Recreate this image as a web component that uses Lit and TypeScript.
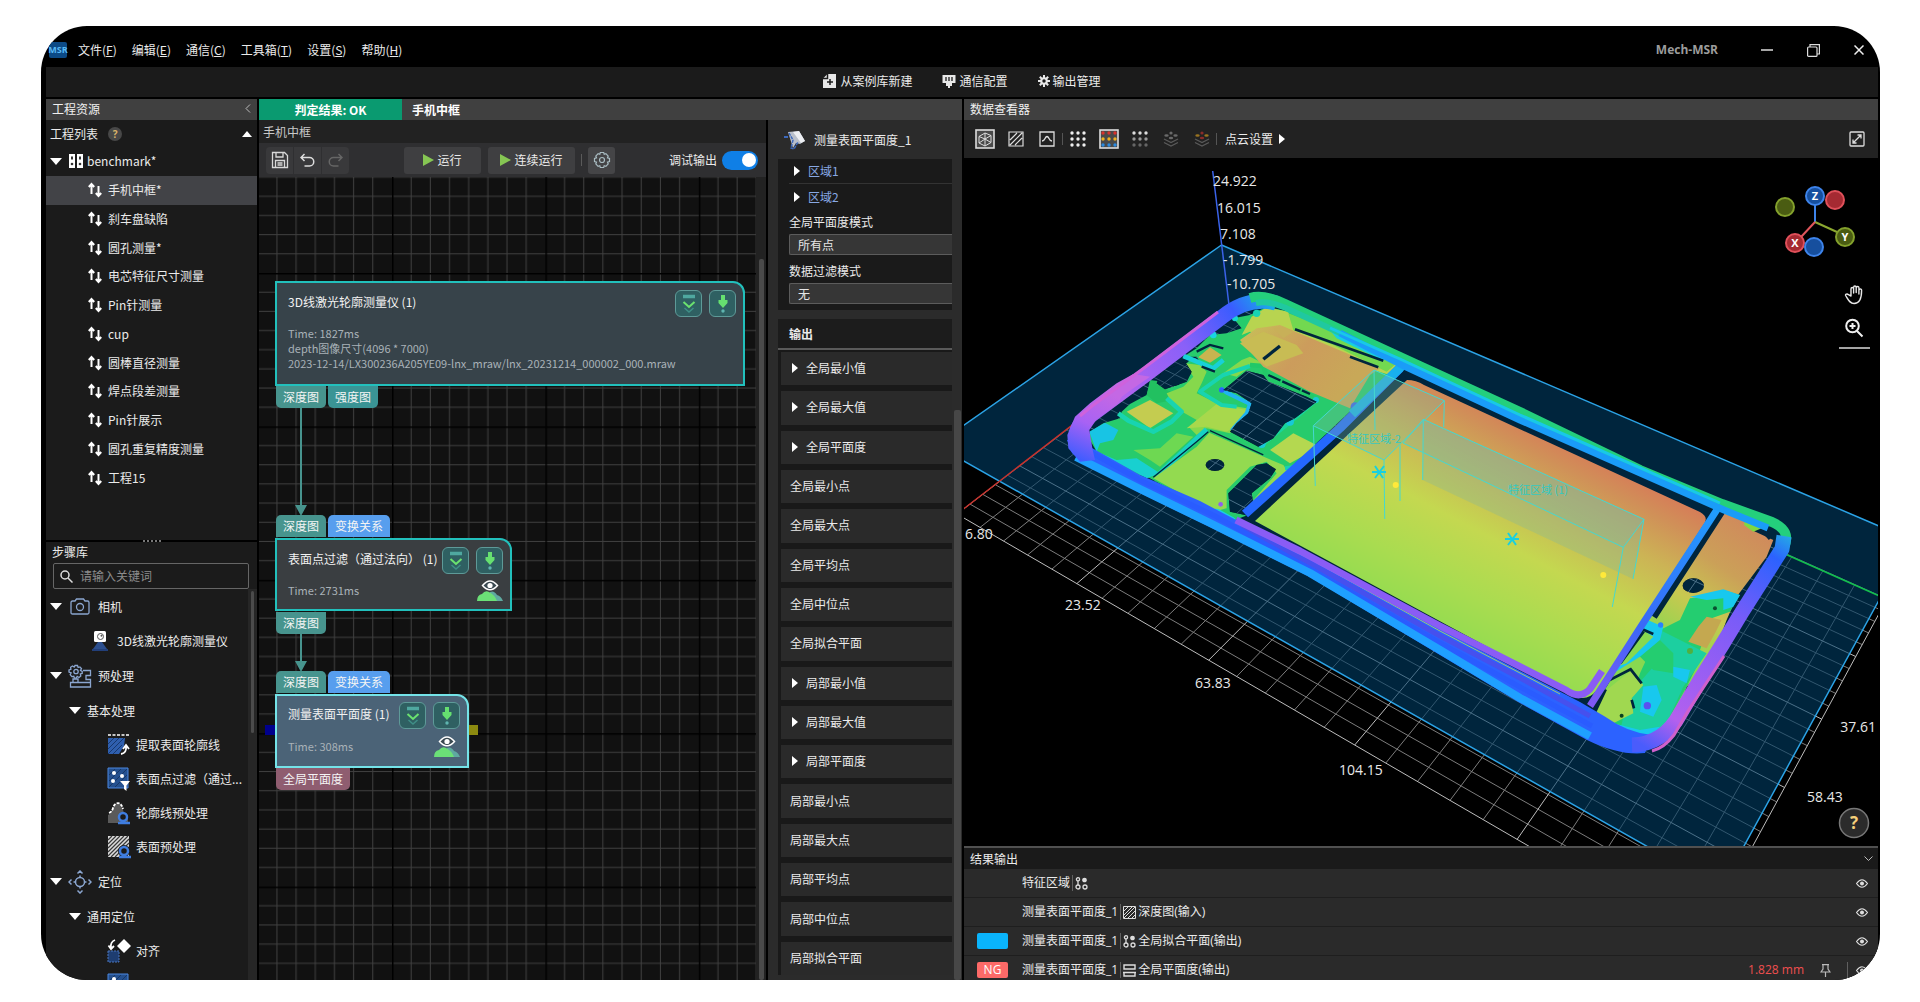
import { LitElement, html, svg, css, nothing } from "lit";
import { customElement } from "lit/decorators.js";
import { classMap } from "lit/directives/class-map.js";

type Pt = [number, number];

/* ---------- perspective floor grid ---------- */
const O: Pt = [1230, 305], R: Pt = [1887, 599], C: Pt = [1699, 945], L: Pt = [957, 514];
const project = (() => {
  const dx1 = R[0] - C[0], dx2 = L[0] - C[0], sx = O[0] - R[0] + C[0] - L[0];
  const dy1 = R[1] - C[1], dy2 = L[1] - C[1], sy = O[1] - R[1] + C[1] - L[1];
  const det = dx1 * dy2 - dy1 * dx2;
  const g = (sx * dy2 - sy * dx2) / det;
  const h = (dx1 * sy - dy1 * sx) / det;
  return (u: number, v: number) => {
    const w = g * u + h * v + 1;
    const x = ((R[0] - O[0] + g * R[0]) * u + (L[0] - O[0] + h * L[0]) * v + O[0]) / w;
    const y = ((R[1] - O[1] + g * R[1]) * u + (L[1] - O[1] + h * L[1]) * v + O[1]) / w;
    return `${x.toFixed(1)},${y.toFixed(1)}`;
  };
})();
const CELLS = 25;
const gridPath = (major: boolean) => {
  let d = "";
  for (let i = 0; i <= CELLS; i++) {
    if ((i % 5 === 0) !== major) continue;
    const t = i / CELLS;
    d += `M${project(t, 0)}L${project(t, 1)}M${project(0, t)}L${project(1, t)}`;
  }
  return d;
};
const MINOR = gridPath(false);
const MAJOR = gridPath(true);

/* ---------- icons ---------- */
const icons = {
  updown: html`<svg width="14" height="16" viewBox="0 0 14 16" fill="none" stroke="#fff" stroke-width="2"><path d="M3.500 12V2.500M.8 5 3.500 2 6.200 5M10.500 4v9.500M7.800 11l2.700 3 2.700-3"/></svg>`,
  bench: html`<svg width="14" height="14" viewBox="0 0 14 14" fill="#fff"><path d="M0 0h6v14H0zM8 0h6v14H8z"/><path d="M2 2.500h2v3H2zM10 2.500h2v3h-2z" fill="#333"/><circle cx="3" cy="10" r="1.300" fill="#333"/><circle cx="11" cy="10" r="1.300" fill="#333"/></svg>`,
  down: html`<svg width="12" height="7" viewBox="0 0 12 7" fill="#fff"><path d="M0 0h12L6 7z"/></svg>`,
  up: html`<svg width="10" height="6" viewBox="0 0 10 6" fill="#fff"><path d="M0 6h10L5 0z"/></svg>`,
  right: html`<svg width="6" height="10" viewBox="0 0 6 10" fill="#fff"><path d="M0 0v10l6-5z"/></svg>`,
  search: html`<svg width="13" height="13" viewBox="0 0 13 13" fill="none" stroke="#ddd" stroke-width="1.500"><circle cx="5" cy="5" r="4"/><path d="m8 8 4.500 4.500"/></svg>`,
  camera: html`<svg width="20" height="18" viewBox="0 0 20 18" fill="none" stroke="#8ba6d0" stroke-width="1.300"><path d="M1 4.500q0-1.500 1.500-1.500H5L6.500 1h7L15 3h2.500Q19 3 19 4.500v10q0 1.500-1.500 1.500h-15Q1 16 1 14.500z"/><circle cx="10" cy="9" r="3.500"/></svg>`,
  laser: html`<svg width="18" height="20" viewBox="0 0 18 20"><rect x="3" y="0" width="12" height="11" rx="1.500" fill="#fff"/><circle cx="9.500" cy="5.500" r="3" fill="none" stroke="#555"/><circle cx="10.500" cy="4.800" r="1" fill="#555"/><path d="M7 11h4l5 7H2z" fill="#2c4f8f"/><path d="M1 18h16v2H1z" fill="#223f7a"/></svg>`,
  prep: html`<svg width="24" height="24" viewBox="0 0 24 24" fill="none" stroke="#8ba6d0" stroke-width="1.300"><path d="M7 1.500h2.500l.6 2 1.800-.6 1.600 1.800-1 1.700 1.700 1v2l-1.900.6.500 2-1.800 1.500-1.800-1-1 1.700H6.500l-.7-1.900-2 .3-1.600-2 .9-1.700L1 8V6l1.900-.7-.3-2L4.500 2l1.700 1z"/><circle cx="8" cy="7.500" r="2.200"/><path d="M2.500 18.500h20v4.500h-20zM5 18.500V15h5v3.500M15 6.500h7.500v5H18v4h4.500v3"/></svg>`,
  extract: html`<svg width="24" height="22" viewBox="0 0 24 22"><path d="M1 1h21" stroke="#fff" stroke-width="1.500" stroke-dasharray="3 1.500"/><path d="M1 4h17l-1 8-5 8H1z" fill="#2f5fae"/><path d="m1 10 6-6M1 15 12 4M1 20 17 4M6 20l9-9" stroke="#17386f"/><path d="M14 20q6-1 5-8m-3 3 3-4 3 4" fill="none" stroke="#fff" stroke-width="1.800"/></svg>`,
  filter: html`<svg width="24" height="24" viewBox="0 0 24 24"><path d="M1 1h20v20H1z" fill="#24508f" stroke="#4a86de"/><path d="m2 8 6-6M2 14 14 2M2 20 20 2M8 20 20 8" stroke="#173766"/><g fill="#fff"><circle cx="7" cy="6" r="2"/><circle cx="15" cy="9" r="2"/><circle cx="6" cy="14" r="2"/><path d="M13 14h10l-3.500 4.500V24L17 22v-3.500z"/></g></svg>`,
  profile: html`<svg width="24" height="24" viewBox="0 0 24 24"><path d="M1 22V14q3-1 4-5t6-7q4 2 5 7t5 5v8z" fill="#5a5a5a"/><path d="M2 12q3-1 4-5t5-5q4 1 5 6" fill="none" stroke="#fff" stroke-width="1.800" stroke-dasharray="3 1.200"/><circle cx="16" cy="16" r="4" fill="#1b1b1b" stroke="#3f7de0" stroke-width="2.500"/><path d="M11 22h12" stroke="#3f7de0" stroke-width="2.500"/></svg>`,
  surface: html`<svg width="24" height="24" viewBox="0 0 24 24"><path d="M1 1h21v21H1z" fill="#ddd"/><path d="m1 5 4-4M1 9l8-8M1 13 13 1M1 17 17 1M1 21 21 1M4 22 22 4M8 22 22 8M12 22l10-10" stroke="#3a3a3a" stroke-width="1.200"/><circle cx="17" cy="16" r="6" fill="#1b1b1b"/><circle cx="17" cy="16" r="4" fill="none" stroke="#3f7de0" stroke-width="2.500"/><path d="M12 22h12" stroke="#3f7de0" stroke-width="2.500"/></svg>`,
  locate: html`<svg width="24" height="24" viewBox="0 0 24 24" fill="none" stroke="#8ba6d0" stroke-width="1.500"><circle cx="12" cy="12" r="4.500"/><path d="M12 5.500V8m0 8v2.500M5.500 12H8m8 0h2.500M9.500 3.500 12 1l2.500 2.500M9.500 20.500 12 23l2.500-2.500M3.500 9.500 1 12l2.500 2.500M20.500 9.500 23 12l-2.500 2.500"/></svg>`,
  align: html`<svg width="24" height="24" viewBox="0 0 24 24"><path d="M1 12h11v11H1z" fill="#1e3d70" stroke="#4a76be" stroke-dasharray="2 1"/><path d="m17 0 7 7-7 7-7-7z" fill="#fff"/><path d="M8 1Q3 3 4 9M1.500 6.500 4 10l3-3" fill="none" stroke="#fff" stroke-width="1.800"/></svg>`,
  newcase: html`<svg width="14" height="14" viewBox="0 0 14 14"><path d="M4.500 0H13v14H0V4.500z" fill="#e8e8e8"/><path d="M0 4.500h4.500V0M7 5v6M4 8h6" stroke="#1b1b1b" stroke-width="1.500" fill="none"/></svg>`,
  port: html`<svg width="14" height="14" viewBox="0 0 14 14"><path d="M.5 1h13v8H10v3H8v2H6v-2H4V9H.5z" fill="#e8e8e8"/><path d="M4 3v4M7 3v4M10 3v4" stroke="#1b1b1b" stroke-width="1.300"/></svg>`,
  cog: html`<svg width="12" height="12" viewBox="0 0 12 12"><g stroke="#e8e8e8" stroke-width="2"><path d="M6 0v12M0 6h12M1.800 1.800l8.400 8.400M10.200 1.800l-8.400 8.400"/></g><circle cx="6" cy="6" r="3.800" fill="#e8e8e8"/><circle cx="6" cy="6" r="1.700" fill="#1b1b1b"/></svg>`,
  save: html`<svg width="18" height="18" viewBox="0 0 18 18" fill="none" stroke="#d8d8d8" stroke-width="1.300"><path d="M1.500 1.500h12l3 3v12h-15z"/><path d="M5 1.500v4.500h7V1.500M4.500 16V9.500h9V16M6.500 12h5M6.500 14h5"/></svg>`,
  undo: html`<svg width="15" height="14" viewBox="0 0 15 14" fill="none" stroke="#ddd" stroke-width="1.500"><path d="M4.500 1 1 4.500 4.500 8M1.500 4.500h8a4.200 4.200 0 0 1 0 8.500H4.500"/></svg>`,
  redo: html`<svg width="15" height="14" viewBox="0 0 15 14" fill="none" stroke="#666" stroke-width="1.500"><path d="M10.500 1 14 4.500 10.500 8M13.500 4.500h-8a4.200 4.200 0 0 0 0 8.500h5"/></svg>`,
  play: html`<svg width="11" height="12" viewBox="0 0 11 12"><path d="M0 0v12l11-6z" fill="#86c653"/></svg>`,
  gear: html`<svg width="18" height="18" viewBox="0 0 18 18" fill="none" stroke="#a9bcc2" stroke-width="1.200"><path d="M7.300 1.500h3.400l.5 1.800 1.700-.6 2.300 2.400-.7 1.700 2 .6v3.200l-2 .6.700 1.700-2.300 2.400-1.700-.6-.5 1.800H7.300l-.5-1.800-1.700.6-2.300-2.400.7-1.700-2-.6V7.400l2-.6-.7-1.700 2.300-2.400 1.700.6z"/><circle cx="9" cy="9" r="2.500"/></svg>`,
  below: html`<svg width="16" height="20" viewBox="0 0 16 20" fill="none"><path d="M2 2.500h12" stroke="#4fa8a0" stroke-width="3.500"/><path d="m2.500 8 5.500 5 5.500-5" stroke="#6be26f" stroke-width="2"/><path d="m3.500 14 4.500 4 4.500-4" stroke="#3f8f87" stroke-width="1.500"/></svg>`,
  drop: html`<svg width="10" height="18" viewBox="0 0 10 18" fill="#66e070"><path d="M3 0h4v5h2.500v3L5 13 .5 8V5H3z"/><circle cx="5" cy="16" r="1.700" fill="#5fb5b0"/></svg>`,
  eyeHill: html`<svg width="26" height="22" viewBox="0 0 26 22"><path d="M13 12q4-2 7 3 4 1 6 6H9z" fill="#5fa9a0"/><path d="M0 21q0-6 5-7 3-4 7-2 6 3 8 9z" fill="#6be077"/><path d="M5.500 5.500Q13-3.500 20.500 5.500 13 14 5.500 5.500z" fill="#3b4a52" stroke="#fff" stroke-width="1.500"/><circle cx="13" cy="5.500" r="2.600" fill="#fff"/></svg>`,
  flat: html`<svg width="22" height="20" viewBox="0 0 22 20"><path d="M4 2 15 1l6 10-5 3-4-1-3 5z" fill="#b9bfca"/><path d="m9 2 6-1 6 10-4 2z" fill="#eceef2"/><path d="m5 3 4 7-2 8 3 1 4-7" fill="none" stroke="#3c69bd" stroke-width="1.500" stroke-dasharray="3 1"/><path d="M0 7h4" stroke="#3c69bd" stroke-width="2"/></svg>`,
  cube: html`<svg width="20" height="20" viewBox="0 0 20 20" fill="none" stroke="#ddd"><rect x="1" y="1" width="18" height="18" fill="#4a4a4a" stroke-width="1.600"/><path d="M4 7.500 10 4l6 2.500v7L10 17l-6-3zM4 7.500l6 2.500 6-3.500M10 10v7M10 4v6l-6 4M10 10l6 3.500"/></svg>`,
  hatch: html`<svg width="16" height="16" viewBox="0 0 16 16" fill="none" stroke="#ddd" stroke-width="1.200"><path d="M1 1h14v14H1zM2 9l7-7M2 14 14 2M7 14l7-7"/></svg>`,
  curve: html`<svg width="16" height="16" viewBox="0 0 16 16" fill="none" stroke="#ddd" stroke-width="1.300"><path d="M1 1h14v14H1zM3 10q2 0 3-2.500Q8 3.500 10 7.500 11 10 13 10"/></svg>`,
  expand: html`<svg width="16" height="16" viewBox="0 0 16 16" fill="none" stroke="#ddd" stroke-width="1.300"><rect x="1" y="1" width="14" height="14" rx="1"/><path d="m4 12 8-8M8.500 4H12v3.500M4 8.500V12h3.500"/></svg>`,
  eye: html`<svg width="12" height="9" viewBox="0 0 12 9"><path d="M.5 4.500Q6-3 11.500 4.500 6 12 .5 4.500z" fill="none" stroke="#ddd" stroke-width="1.200"/><circle cx="6" cy="4.500" r="2" fill="#ddd"/></svg>`,
  pin: html`<svg width="11" height="13" viewBox="0 0 11 13" fill="none" stroke="#bbb" stroke-width="1.200"><path d="M2 .6h7M3 .6v4.500L1 8h9L8 5.100V.6M5.500 8v5"/></svg>`,
  points: html`<svg width="13" height="13" viewBox="0 0 13 13" fill="none" stroke="#ddd" stroke-width="1.300"><circle cx="3" cy="2.300" r="1.600"/><path d="M3 4v4"/><circle cx="3" cy="10" r="2"/><circle cx="10" cy="10" r="2"/><circle cx="9.500" cy="3" r="1.700" fill="#ddd"/></svg>`,
  range: html`<svg width="13" height="13" viewBox="0 0 13 13" fill="none" stroke="#ddd" stroke-width="1.400"><path d="M1 5V1h11v4zM0 8.500h13M1 9v3h11V9"/></svg>`,
  hatchSm: html`<svg width="13" height="13" viewBox="0 0 13 13" fill="none" stroke="#ddd"><path d="M.5.500h12v12H.5zM1 5l4-4M1 9l8-8M1 12 12 1M5 12l7-7M9 12l3-3"/></svg>`,
};

const dots = (c: string[]) => svg`${c.map((f, r) => [0, 1, 2].map((k) => svg`<circle cx=${4 + k * 6} cy=${4 + r * 6} r="1.700" fill=${f}/>`))}`;
const layers = (top: string, mid: string) => html`<svg width="16" height="16" viewBox="0 0 16 16" fill="none" stroke="#5a5a5a" stroke-width="1.300"><path d="m1 8 7 3.500L15 8M1 11.500 8 15l7-3.500"/><g stroke="none"><circle cx="8" cy="2" r="1.600" fill=${top}/><ellipse cx="3.500" cy="4.500" rx="2.200" ry="1.300" fill=${mid}/><ellipse cx="12.500" cy="4.500" rx="2.200" ry="1.300" fill=${mid}/><ellipse cx="8" cy="7" rx="2.200" ry="1.300" fill=${top}/></g></svg>`;

/* ---------- data ---------- */
const menus: [string, string][] = [["文件", "F"], ["编辑", "E"], ["通信", "C"], ["工具箱", "T"], ["设置", "S"], ["帮助", "H"]];
const projects = ["手机中框*", "刹车盘缺陷", "圆孔测量*", "电芯特征尺寸测量", "Pin针测量", "cup", "圆棒直径测量", "焊点段差测量", "Pin针展示", "圆孔重复精度测量", "工程15"];
const library: { kind: string; label: string; icon?: unknown }[] = [
  { kind: "root", label: "相机", icon: icons.camera },
  { kind: "leaf1", label: "3D线激光轮廓测量仪", icon: icons.laser },
  { kind: "root", label: "预处理", icon: icons.prep },
  { kind: "sub", label: "基本处理" },
  { kind: "leaf2", label: "提取表面轮廓线", icon: icons.extract },
  { kind: "leaf2", label: "表面点过滤（通过...", icon: icons.filter },
  { kind: "leaf2", label: "轮廓线预处理", icon: icons.profile },
  { kind: "leaf2", label: "表面预处理", icon: icons.surface },
  { kind: "root", label: "定位", icon: icons.locate },
  { kind: "sub", label: "通用定位" },
  { kind: "leaf2", label: "对齐", icon: icons.align },
  { kind: "leaf2", label: "", icon: icons.filter },
];
const outputs: [string, boolean][] = [
  ["全局最小值", true], ["全局最大值", true], ["全局平面度", true], ["全局最小点", false], ["全局最大点", false],
  ["全局平均点", false], ["全局中位点", false], ["全局拟合平面", false], ["局部最小值", true], ["局部最大值", true],
  ["局部平面度", true], ["局部最小点", false], ["局部最大点", false], ["局部平均点", false], ["局部中位点", false], ["局部拟合平面", false],
];

/* ---------- shared text styling ---------- */
const base = css`
  :host { display: block; box-sizing: border-box; color: #ebebeb; font: 12px/16px "Noto Sans CJK SC", "Open Sans", sans-serif; }
  *, *::before, *::after { box-sizing: border-box; }
  button { display: inline-flex; align-items: center; margin: 0; padding: 0; border: 0; background: none; color: inherit; font: inherit; white-space: nowrap; }
  svg { display: block; flex: none; }
  .bar { height: 21px; background: #404040; display: flex; align-items: center; padding: 0 6px 2px; color: #f0f0f0; }
`;

@customElement("msr-sidebar")
class MsrSidebar extends LitElement {
  static styles = [base, css`
    :host { display: flex; flex-direction: column; min-height: 0; background: #1b1b1b; }
    .bar { justify-content: space-between; }
    .listhead { height: 27px; display: flex; align-items: center; gap: 10px; padding: 0 5px 0 4px; }
    .q { width: 14px; height: 14px; border-radius: 50%; background: #484848; color: #d9b36a; font: 700 10px/14px "Open Sans", sans-serif; text-align: center; }
    .fold { margin-left: auto; }
    .tree { display: grid; grid-auto-rows: 1fr; height: 345px; margin-bottom: 48px; }
    .tree button { padding-left: 42px; gap: 6px; }
    .tree .head { padding-left: 4px; gap: 4px; }
    .tree .head svg:first-child { margin-right: 3px; }
    .tree .on { background: #424347; }
    .split { height: 2px; background: #000; display: flex; justify-content: center; }
    .grip { width: 18px; height: 2px; background: repeating-linear-gradient(90deg, #777 0 2px, transparent 2px 4px); }
    .title { height: 21px; line-height: 20px; padding-left: 6px; }
    .search { height: 26px; margin: 0 8px 0 7px; border: 1px solid #666; border-radius: 2px; display: flex; align-items: center; gap: 7px; padding: 0 6px; }
    .search input { min-width: 0; flex: 1; background: none; border: 0; outline: 0; color: inherit; font: inherit; padding: 0; }
    .search input::placeholder { color: #8c8c8c; opacity: 1; }
    .lib { flex: 1; min-height: 0; display: flex; overflow: hidden; }
    .rows { flex: 1; min-width: 0; display: flex; flex-direction: column; overflow: hidden; }
    .rows button { flex: none; height: 34px; }
    .rows .root, .rows .sub { height: 35px; }
    .rows .root { padding-left: 4px; gap: 8px; }
    .rows .sub { padding-left: 23px; gap: 6px; }
    .rows .leaf1 { padding-left: 45px; gap: 8px; }
    .rows .leaf2 { padding-left: 61px; gap: 5px; }
    .icon { width: 24px; display: flex; justify-content: center; }
    .root .icon { margin-left: -2px; margin-right: -2px; }
    .leaf1 .icon { width: 18px; }
    .track { width: 9px; background: #262626; padding: 2px 3px 0; }
    .thumb { height: 142px; background: #4b4b4b; border-radius: 2px; }
  `];
  render() {
    return html`
      <div class="bar"><span>工程资源</span><svg width="6" height="9" viewBox="0 0 6 9" fill="none" stroke="#bbb"><path d="M5 .5 1 4.500l4 4"/></svg></div>
      <div class="listhead"><span>工程列表</span><span class="q">?</span><span class="fold">${icons.up}</span></div>
      <div class="tree">
        <button class="head">${icons.down}${icons.bench}<span>benchmark*</span></button>
        ${projects.map((p, i) => html`<button class=${classMap({ on: i === 0 })}>${icons.updown}<span>${p}</span></button>`)}
      </div>
      <div class="split"><div class="grip"></div></div>
      <div class="title">步骤库</div>
      <div class="search">${icons.search}<input type="search" aria-label="步骤库" placeholder="请输入关键词"></div>
      <div class="lib">
        <div class="rows">
          ${library.map((r) => html`<button class=${r.kind}>
            ${r.kind === "root" || r.kind === "sub" ? icons.down : nothing}
            ${r.icon ? html`<span class="icon">${r.icon}</span>` : nothing}
            <span>${r.label}</span></button>`)}
        </div>
        <div class="track"><div class="thumb"></div></div>
      </div>`;
  }
}

@customElement("msr-flow")
class MsrFlow extends LitElement {
  static styles = [base, css`
    :host { display: flex; flex-direction: column; flex: 1; min-width: 0; background: #222; }
    .name { height: 23px; line-height: 23px; padding: 0 4px; color: #c8c8c8; }
    .tools { height: 34px; display: flex; align-items: center; background: #2f2f31; padding: 0 8px 0 7px; }
    .group { display: flex; gap: 1px; border-radius: 4px; overflow: hidden; }
    .sq { width: 27px; height: 27px; justify-content: center; background: #39393b; }
    .run { height: 27px; justify-content: center; gap: 3px; background: #3f3f41; border-radius: 3px; width: 77px; }
    .run.wide { width: 87px; margin-left: 7px; }
    .start { margin-left: 55px; }
    .sep { width: 1px; height: 12px; background: #5a5a5a; margin: 0 6px; }
    .sq.solo { border-radius: 3px; background: #454547; }
    .debug { margin-left: auto; display: flex; align-items: center; gap: 5px; }
    .debug input { appearance: none; margin: 0; width: 36px; height: 19px; border-radius: 10px; background: #0f7fe6; display: flex; justify-content: flex-end; align-items: center; padding: 0 2px; }
    .debug input::before { content: ""; width: 14px; height: 14px; border-radius: 50%; background: #fff; }
    .wrap { flex: 1; min-height: 0; display: flex; }
    .canvas { position: relative; flex: 1; min-width: 0; overflow: hidden; background: #111; }
    .grid, .links { position: absolute; left: 0; top: 0; width: 100%; height: 100%; }
    .track { width: 10px; background: #222; padding: 82px 2px 0 3px; }
    .thumb { height: 100%; background: #4a4a4a; border-radius: 2px; }
    .node { position: absolute; left: 16px; border: 2px solid #22c0bc; border-top-right-radius: 12px; background: #37434a; display: flex; flex-direction: column; justify-content: space-between; padding: 7px 7px 11px 11px; }
    .n1 { top: 104px; width: 470px; height: 105px; }
    .n2 { top: 361px; width: 237px; height: 73px; background: #3a3e41; padding-bottom: 7px; }
    .n3 { top: 517px; width: 194px; height: 74px; background: #4b6377; border-color: #74e3e8; padding-top: 6px; padding-bottom: 8px; }
    .head { display: flex; align-items: center; gap: 7px; }
    .head span { flex: 1; min-width: 0; white-space: nowrap; color: #f2f2f2; padding-bottom: 3px; }
    .head button { width: 27px; height: 27px; border: 1px solid #5e9a98; border-radius: 6px; background: #2f6062; justify-content: center; }
    .info { display: flex; justify-content: space-between; align-items: center; color: #a9b2b8; font-size: 11px; line-height: 15px; }
    .info div { padding-bottom: 2px; }
    .ports { position: absolute; left: 17px; display: flex; gap: 2px; }
    .ports span { height: 22px; padding: 0 7px; line-height: 21px; color: #f4f4f4; background: #47948e; border-radius: 0 0 5px 5px; }
    .ports.in span { border-radius: 5px 5px 0 0; }
    .ports .cy { background: #3a9495; }
    .ports .bl { background: #579eee; }
    .ports .pk { background: #8f5d70; }
    .o1 { top: 209px; } .i2 { top: 338px; } .o2 { top: 435px; } .i3 { top: 494px; } .o3 { top: 591px; }
    .pinl, .pinr { position: absolute; top: 548px; width: 10px; height: 10px; background: #00008c; left: 6px; }
    .pinr { left: 209px; background: #8c8a10; }
  `];
  private node(cls: string, title: string, info: unknown, eye: boolean) {
    return html`<div class="node ${cls}">
      <div class="head"><span>${title}</span><button aria-label="单步执行">${icons.below}</button><button aria-label="执行">${icons.drop}</button></div>
      <div class="info"><div>${info}</div>${eye ? icons.eyeHill : nothing}</div>
    </div>`;
  }
  render() {
    const cols = [1, 2, 3, 4, 5, 6, 7].map((k) => k * 19.17);
    return html`
      <div class="name">手机中框</div>
      <div class="tools">
        <div class="group"><button class="sq" aria-label="保存">${icons.save}</button><button class="sq" aria-label="撤销">${icons.undo}</button><button class="sq" aria-label="重做">${icons.redo}</button></div>
        <button class="run start">${icons.play}运行</button>
        <button class="run wide">${icons.play}连续运行</button>
        <span class="sep"></span>
        <button class="sq solo" aria-label="设置">${icons.gear}</button>
        <label class="debug">调试输出<input type="checkbox" checked></label>
      </div>
      <div class="wrap">
        <div class="canvas">
          <svg class="grid" aria-hidden="true">
            <defs><pattern id="g" x="133" y="96" width="153.4" height="153.4" patternUnits="userSpaceOnUse">
              <path d=${cols.map((c) => `M${c} 0V154M0 ${c}H154`).join("")} stroke="#404040"/>
              <path d="M0 .5H154M.5 0V154" stroke="#000" stroke-width="2"/>
            </pattern></defs>
            <rect width="100%" height="100%" fill="url(#g)"/>
          </svg>
          <svg class="links" aria-hidden="true" fill="#47948e"><path d="M42 230V330M42 456V490" stroke="#47948e" stroke-width="2"/><path d="M36 328h12l-6 11zM36 484h12l-6 11z"/></svg>
          ${this.node("n1", "3D线激光轮廓测量仪 (1)", html`Time: 1827ms<br>depth图像尺寸(4096 * 7000)<br>2023-12-14/LX300236A205YE09-lnx_mraw/lnx_20231214_000002_000.mraw`, false)}
          <div class="ports o1"><span>深度图</span><span class="cy">强度图</span></div>
          <div class="ports in i2"><span>深度图</span><span class="bl">变换关系</span></div>
          ${this.node("n2", "表面点过滤（通过法向） (1)", "Time: 2731ms", true)}
          <div class="ports o2"><span>深度图</span></div>
          <div class="ports in i3"><span>深度图</span><span class="bl">变换关系</span></div>
          <div class="pinl"></div><div class="pinr"></div>
          ${this.node("n3", "测量表面平面度 (1)", "Time: 308ms", true)}
          <div class="ports o3"><span class="pk">全局平面度</span></div>
        </div>
        <div class="track"><div class="thumb"></div></div>
      </div>`;
  }
}

@customElement("msr-params")
class MsrParams extends LitElement {
  static styles = [base, css`
    :host { display: flex; flex-direction: column; width: 194px; background: #2b2b2b; overflow: hidden; }
    .top { height: 39px; display: flex; align-items: center; gap: 8px; padding-left: 16px; }
    .body { display: flex; flex: 1; min-height: 0; }
    .col { flex: 1; min-width: 0; padding-left: 10px; display: flex; flex-direction: column; }
    .card { background: #1a1a1a; padding: 0 0 6px 11px; display: flex; flex-direction: column; }
    .area { height: 25px; gap: 8px; padding-left: 5px; color: #88a8e4; border-bottom: 1px solid #333; }
    .area + .area { border: 0; }
    label { height: 25px; line-height: 25px; }
    label + select + label { height: 28px; line-height: 31px; }
    select { appearance: none; height: 21px; margin: 0; padding: 0 8px; background: #363636; color: #e6e6e6; border: 1px solid #5c5c5c; border-right: 0; border-radius: 2px 0 0 2px; font: inherit; }
    .out { margin-top: 9px; height: 31px; line-height: 30px; padding-left: 11px; background: #1c1c1c; border-bottom: 2px solid #5a5a5a; font-weight: 700; }
    .list { display: grid; grid-auto-rows: 1fr; gap: 6px; height: 625px; padding: 2px 0 0 3px; background: #191919; flex: none; }
    .list button { background: #2a2a2a; padding: 0 0 1px 9px; gap: 8px; }
    .list .sub { padding-left: 11px; }
    .track { width: 10px; padding: 251px 1px 0 2px; }
    .thumb { height: 100%; background: #474747; border-radius: 2px; }
  `];
  render() {
    return html`
      <div class="top">${icons.flat}<span>测量表面平面度_1</span></div>
      <div class="body">
        <div class="col">
          <div class="card">
            <button class="area">${icons.right}区域1</button>
            <button class="area">${icons.right}区域2</button>
            <label for="mode">全局平面度模式</label>
            <select id="mode"><option>所有点</option></select>
            <label for="filter">数据过滤模式</label>
            <select id="filter"><option>无</option></select>
          </div>
          <div class="out">输出</div>
          <div class="list">${outputs.map(([t, s]) => html`<button class=${classMap({ sub: s })}>${s ? icons.right : nothing}${t}</button>`)}</div>
        </div>
        <div class="track"><div class="thumb"></div></div>
      </div>`;
  }
}

@customElement("msr-scene")
class MsrScene extends LitElement {
  static styles = css`
    :host { display: block; flex: 1; min-height: 0; background: #000; overflow: hidden; }
    svg { display: block; width: 100%; height: 100%; }
    .num { font: 14px "Open Sans", sans-serif; fill: #e8e8e8; }
    .end { text-anchor: end; }
    .axis { font: 700 11px "Open Sans", sans-serif; fill: #fff; text-anchor: middle; }
    .tag { font: 11px "Noto Sans CJK SC", sans-serif; fill: #35c8c0; }
    .help { font: 700 17px "Open Sans", sans-serif; fill: #f5cf7a; text-anchor: middle; }
  `;
  private floor() {
    return svg`<path d=${MINOR} stroke="#7c7c7c" fill="none"/><path d=${MAJOR} stroke="#bdbdbd" fill="none"/>`;
  }
  private plane() {
    return svg`<path d="M1221.500 245 1900 535V562L1744 846 1735 896 955 456 950 435z" fill="#003e66" fill-opacity=".6" stroke="#2ba3e6" stroke-width="1.500"/>`;
  }
  render() {
    return html`<svg viewBox="964 158 914 688" preserveAspectRatio="xMidYMid slice" role="img" aria-label="点云">
      <defs>
        <linearGradient id="plate" gradientUnits="userSpaceOnUse" x1="1395" y1="640" x2="1520" y2="400">
          <stop offset="0" stop-color="#86dc50"/><stop offset=".28" stop-color="#a9dc50"/><stop offset=".5" stop-color="#c4d850"/><stop offset=".7" stop-color="#ccb455"/><stop offset=".85" stop-color="#d09158"/><stop offset="1" stop-color="#da7058"/>
        </linearGradient>
        <linearGradient id="leftEdge" gradientUnits="userSpaceOnUse" x1="1075" y1="440" x2="1270" y2="300">
          <stop offset="0" stop-color="#8f62f5"/><stop offset=".25" stop-color="#b464ee"/><stop offset=".6" stop-color="#8a60f8"/><stop offset=".85" stop-color="#3a5cff"/><stop offset="1" stop-color="#18b0e8"/>
        </linearGradient>
        <linearGradient id="cornerEdge" gradientUnits="userSpaceOnUse" x1="180" y1="400" x2="90" y2="600">
          <stop offset="0" stop-color="#c468e4"/><stop offset=".5" stop-color="#a862f4"/><stop offset="1" stop-color="#3f5cff"/>
        </linearGradient>
        <linearGradient id="rightEdge" gradientUnits="userSpaceOnUse" x1="1790" y1="530" x2="1650" y2="750">
          <stop offset="0" stop-color="#22b8e0"/><stop offset=".12" stop-color="#2c62ff"/><stop offset=".4" stop-color="#7a5cf8"/><stop offset=".85" stop-color="#b460ee"/><stop offset="1" stop-color="#4a5cfc"/>
        </linearGradient>
        <linearGradient id="bar2" gradientUnits="userSpaceOnUse" x1="1720" y1="507" x2="1590" y2="705">
          <stop offset="0" stop-color="#1fa0ff"/><stop offset=".6" stop-color="#3a68f8"/><stop offset="1" stop-color="#8058f5"/>
        </linearGradient>
        <linearGradient id="orange" gradientUnits="userSpaceOnUse" x1="600" y1="200" x2="850" y2="420">
          <stop offset="0" stop-color="#c8bc58"/><stop offset=".5" stop-color="#cc9c5c"/><stop offset="1" stop-color="#c8a858"/>
        </linearGradient>
        <linearGradient id="tail" gradientUnits="userSpaceOnUse" x1="900" y1="230" x2="650" y2="600">
          <stop offset="0" stop-color="#d08a5c"/><stop offset=".35" stop-color="#cba058"/><stop offset=".65" stop-color="#c8c850"/><stop offset="1" stop-color="#88d850"/>
        </linearGradient>
        <clipPath id="holes">
          <path transform="translate(1050 260) scale(.3333)" d="M590 332 640 345 655 365 770 410 800 425 735 475 705 490 670 535 625 560 540 515 560 490 595 460 605 430 560 400 520 390 545 370z"/>
          <path transform="translate(1050 260) scale(.3333)" d="M535 700 570 665 620 615 650 610 678 628 660 655 605 700 610 730 585 765 540 755z"/>
          <path transform="translate(1050 260) scale(.3333)" d="M345 388 320 370 335 335 405 305 425 335 410 365z"/>
          <ellipse transform="translate(1050 260) scale(.3333)" cx="495" cy="615" rx="28" ry="18"/>
          <ellipse transform="translate(1440 440) scale(.3333)" cx="760" cy="437" rx="32" ry="22"/>
        </clipPath>
      </defs>

      ${this.floor()}${this.plane()}
      <path d="M1785 554 1886 599" stroke="#13c04c" stroke-width="1.500"/>
      <path d="M957 514 1150 365" stroke="#c8322c" stroke-width="1.500"/>
      <path d="M1212.700 171 1229 305" stroke="#3a62e8" stroke-width="1.500"/>

      <g transform="translate(1050 260) scale(.3333)">
        <path d="M600 165 650 140 720 155 835 205 1045 310 1000 365 915 440 735 610 720 660 620 755 540 785 480 755 300 655 250 640 140 575 120 540 120 515 160 490 210 475 215 455 240 432 290 405 300 370 345 385 385 375 425 340 405 315 420 300 455 315 440 290 400 290 440 265 480 225 530 220 575 205 550 175z" fill="#27cb6c"/>
        <path d="M300 360 340 365 350 390 375 400 370 420 320 430 290 405z" fill="#22c060"/>
        <path d="M130 570 200 600 260 595 330 640 290 655z" fill="#18d0d0"/>
        <path d="M118 515 165 488 205 510 190 540 150 550 140 575z" fill="#18c4e4"/>
        <path d="M250 570 330 565 380 520 430 530 330 620 300 600z" fill="#6ed852"/>
        <path d="M230 455 300 420 370 460 300 505z" fill="#c4cc50"/>
        <path d="M405 310 450 315 470 335 455 370 440 400 500 430 590 445 590 475 540 520 470 505 440 525 420 505 440 480 370 440 350 400 400 380 430 350z" fill="#86d84c"/>
        <path d="M410 505 500 432 590 450 580 485 530 515 470 500z" fill="#a8d84c"/>
        <path d="M520 340 575 300 600 290 640 310 600 320 560 350z" fill="#86d84c"/>
        <g fill="none" stroke-linejoin="round">
          <path d="M205 460 235 482 310 515 365 485 395 455 350 415" stroke="#18d4b0" stroke-width="14"/>
          <path d="M400 288 490 325 520 300" stroke="#18d0d8" stroke-width="14"/>
          <path d="M600 318 520 345 450 395 515 435 560 440" stroke="#18d4b0" stroke-width="12"/>
          <path d="M512 385 530 398 600 432 590 460 545 512" stroke="#20b4f0" stroke-width="12"/>
          <path d="M800 420 735 475 630 560" stroke="#18d49c" stroke-width="12"/>
          <path d="M470 508 320 650" stroke="#18d0c4" stroke-width="16"/>
          <path d="M600 315 640 318 650 350 790 412" stroke="#22c868" stroke-width="14"/>
        </g>
        <path d="M445 292 480 262 515 285 480 308z" fill="#c8b450"/>
        <path d="M478 518 645 592 700 615 722 645 620 752 610 720 680 640 650 605 600 620 530 690 530 745 490 755 310 655 440 560z" fill="#93da50"/>
        <path d="M660 570 730 520 810 560 720 610z" fill="#b4d850"/>
        <path d="M605 170 650 142 715 155 730 200 820 225 1045 315 1020 345 900 310 690 240 600 215 575 225z" fill="#b8d450"/>
        <path d="M715 160 835 205 1040 310 1010 335 850 255 730 210z" fill="#72d850"/>
        <path d="M835 205 880 220 1010 290 1000 302 860 235z" fill="#16cfe0"/>
        <path d="M570 240 620 205 690 195 760 225 890 280 990 325 960 345 900 445 780 395 640 320z" fill="url(#orange)"/>
        <path d="M570 250 640 215 740 255 760 280 650 320z" fill="#c8bc54"/>
        <path d="M670 205 700 200 730 215 700 235z" fill="#c8b058"/>
        <path d="M500 760 545 785" stroke="#18cfe4" stroke-width="28" stroke-linecap="round"/>
        <path d="M705 625 740 620 790 575" stroke="#18cfb4" stroke-width="12" fill="none"/>
        <path d="M690 258 640 298" stroke="#00253d" stroke-width="10"/>
        <path d="M735 208 1000 302M900 290 985 322" stroke="#00253d" stroke-width="8"/>
        <path d="M655 345 780 402" stroke="#00253d" stroke-width="7" stroke-dasharray="40 6 60 5"/>
        <path d="M310 652 440 545 475 515M480 512 640 585" stroke="#00253d" stroke-width="4" fill="none"/>
        <path d="M440 275 480 255 520 265 M455 320 495 335" stroke="#00253d" stroke-width="7" fill="none"/>
        <path d="M1055 340 600 780" stroke="#00253d" stroke-width="44"/>
        <circle cx="555" cy="175" r="9" fill="#18d4d4"/><circle cx="620" cy="160" r="11" fill="#18d4b4"/><circle cx="490" cy="225" r="10" fill="#18d4e4"/>
        <circle cx="720" cy="485" r="12" fill="#18c8d8"/><circle cx="635" cy="552" r="12" fill="#18c8d8"/><circle cx="798" cy="420" r="9" fill="#18c8d8"/>
        <circle cx="915" cy="440" r="13" fill="#3c62f0"/><circle cx="512" cy="733" r="7" fill="#8f60f0"/><circle cx="515" cy="390" r="8" fill="#2a60ff"/>
      </g>
      <g transform="translate(1440 440) scale(.3333)">
        <path d="M850 215 900 225 935 270 1000 300 980 350 890 470 860 540 830 620 790 690 740 740 700 850 650 885 580 890 470 850 465 790 500 740 545 665 600 570z" fill="url(#tail)"/>
        <path d="M750 475 800 470 850 450 900 465 870 515 800 540 790 600 770 660 790 640 740 740 680 850 640 885 580 885 500 860 580 760 600 700 660 570 720 540z" fill="#24cd70"/>
        <path d="M800 530 845 540 825 580 800 625 745 605 775 560z" fill="#c4a850"/>
        <path d="M660 570 800 640 730 740 680 850 630 885 540 870 570 760 640 680z" fill="#1ccfa0"/>
        <path d="M590 640 650 590 700 640 700 700 640 690z" fill="#24cd70"/>
        <path d="M750 470 850 448 900 465 880 500 850 510 850 475 800 480zM600 530 670 560 660 600 600 650 520 700 480 750 500 690 560 670 640 590 600 565zM700 680 750 690 740 730 700 710zM610 740 650 735 665 780 640 830 600 815zM520 850 600 870 660 860 640 888 580 890z" fill="#18c8ee"/>
        <path d="M500 750 575 690 610 735 575 775 580 820 510 855 470 830 475 790z" fill="#a0d850"/>
        <path d="M555 650 600 590 630 590 590 640z" fill="#88d850"/>
        <path d="M480 745 500 725 572 688 605 730M575 780 582 805M600 565 640 582" fill="none" stroke="#00253d" stroke-width="8"/>
        <path d="M850 205 640 530M605 570 535 665M490 745 450 830" stroke="#00253d" stroke-width="24"/>
        <path d="M860 215 900 215 960 262 995 300" fill="none" stroke="#00253d" stroke-width="12" stroke-dasharray="18 6"/>
        <path d="M915 240 940 230 965 265 940 275 912 255z" fill="#80d840"/>
        <circle cx="622" cy="797" r="11" fill="#5a50f0"/><circle cx="545" cy="827" r="6" fill="#0a4020"/><circle cx="662" cy="555" r="8" fill="#2a80ff"/><circle cx="825" cy="505" r="6" fill="#0a5030"/><circle cx="750" cy="633" r="9" fill="#50b040"/>
      </g>
      <g clip-path="url(#holes)"><rect x="1060" y="290" width="740" height="470" fill="#000"/>${this.floor()}${this.plane()}</g>

      <path d="M1396 374 1720 510 1590 706 1572 706 1240 524z" fill="#00253d"/>
      <path d="M1407 380Q1416 380 1424 385L1700 512Q1709 517 1704 524L1597 690Q1588 701 1577 697L1565 689 1255 521z" fill="url(#plate)"/>

      <g fill="none" stroke-linejoin="round">
        <path d="M1720 505 1640 628 1590 706" stroke="url(#bar2)" stroke-width="7"/>
        <path d="M1400 368 1340 428 1245 514" stroke="#2468ff" stroke-width="9"/>
        <path d="M1404 364 1352 414" stroke="#18b0ee" stroke-width="9"/>
        <path d="M1067 440 1072 453 1083 463 1140 493 1210 527 1310 577 1440 655 1520 703 1587 740Q1620 756 1645 753L1652 735Q1628 733 1604 716L1580 702 1520 671 1440 629 1310 558 1240 522 1217 510 1200 501 1140 475 1092 448 1084 438z" fill="#2c62ff"/>
        <path d="M1240 528 1310 563 1440 636 1520 678 1590 716" stroke="#4650ee" stroke-width="5"/>
        <path d="M1092 453 1140 480 1217 517 1310 569 1440 643 1520 687 1592 726" stroke="#2a5cff" stroke-width="5"/>
        <path d="M1076 457 1140 489 1210 523 1310 573 1440 650 1520 698 1590 736" stroke="#1fa0ff" stroke-width="8"/>
        <path d="M1246 527 1310 559 1440 631 1560 694" stroke="#9cc87a" stroke-width="1"/>
        <path d="M1236 520 1300 551 1440 626 1566 690Q1580 700 1590 689L1602 671" stroke="#8a5cf5" stroke-width="7"/>
        <path d="M1079 444Q1070 430 1090 416L1148 373 1222 317Q1248 296 1276 303" stroke="url(#leftEdge)" stroke-width="15"/>
        <path transform="translate(1050 260) scale(.3333)" d="M52 525 75 470 120 430 200 370 250 342 300 350 250 385 215 410 205 430 140 478 118 510 128 570 135 600 90 605 55 565z" fill="url(#cornerEdge)"/>
        <path d="M1080 416 1092 406 1144 368 1218 312" stroke="#cf62dc" stroke-width="3"/>
        <path d="M1250 298Q1264 294 1285 304L1400 357 1520 412 1640 470 1722 504 1772 522Q1792 531 1784 547" stroke="#24cf7c" stroke-width="10"/>
        <path d="M1256 303Q1270 300 1290 310L1340 333" stroke="#20c8a0" stroke-width="6"/>
        <path d="M1340 333 1400 364 1520 420 1724 510 1768 528" stroke="#1a9cf8" stroke-width="7"/>
        <path d="M1330 328 1400 359 1520 415 1720 503" stroke="#18c8e8" stroke-width="3"/>
        <path d="M1784 536 1782 549 1742 612 1722 645 1700 680 1680 714Q1664 744 1632 745" stroke="url(#rightEdge)" stroke-width="15"/>
        <path d="M1724 656 1688 711 1674 735Q1664 748 1652 751" stroke="#d060cc" stroke-width="3"/>
      </g>

      <g fill="#7fb8a0" fill-opacity=".32" stroke="#45d8d0" stroke-width="1">
        <path d="M1374 370 1444.300 400.700 1384 460 1313.300 425.700z"/>
        <path d="M1423.300 419.300 1644 519.300 1633 579 1422.700 480z" stroke="none"/>
        <path d="M1403 443 1423.300 419.300 1644 519.300 1623.300 547.300z"/>
        <path d="M1374 370 1375 430M1444.300 400.700 1443.700 427M1313.300 425.700 1315.300 486M1384 460 1384.700 519M1400 445 1400 501M1423.300 419 1422.700 480M1623.300 547.300 1612.300 607M1644 519 1633 579" fill="none"/>
      </g>
      <text class="tag" x="1347" y="443">特征区域-2</text>
      <text class="tag" x="1508" y="494">特征区域 (1)</text>
      <g stroke="#18d0e0" stroke-width="2"><path d="M1372 472h14M1375 466l8 12M1384 466l-9 12M1505 539h14M1508 533l8 12M1517 533l-9 12"/></g>
      <circle cx="1395.700" cy="485" r="3" fill="#ffe93a"/><circle cx="1603.300" cy="575" r="3" fill="#ffe93a"/>

      <g class="num">
        <text x="1213" y="186">24.922</text><text x="1217" y="213">16.015</text><text x="1220" y="239">7.108</text>
        <text x="1223" y="265">-1.799</text><text x="1227" y="289">-10.705</text>
        <text x="965" y="539">6.80</text><text x="1065" y="610">23.52</text><text x="1195" y="688">63.83</text><text x="1339" y="775">104.15</text>
        <text class="end" x="1876" y="732">37.61</text><text x="1807" y="802">58.43</text>
      </g>

      <g stroke-width="2">
        <path d="M1815 222V205" stroke="#3d83ea"/><path d="M1815 222 1837 232" stroke="#8ca830"/><path d="M1815 222 1801 237" stroke="#e0565c"/>
        <circle cx="1785" cy="207" r="9" fill="#4a5c12" stroke="#83a02c"/>
        <circle cx="1835" cy="200" r="9" fill="#a52a32" stroke="#e0505a"/>
        <circle cx="1815" cy="196" r="9" fill="#164f9e" stroke="#3d83ea"/>
        <circle cx="1845" cy="237" r="9" fill="#4a5c12" stroke="#83a02c"/>
        <circle cx="1795" cy="243" r="9" fill="#a52a32" stroke="#e0505a"/>
        <circle cx="1814" cy="247" r="9" fill="#164f9e" stroke="#3d83ea"/>
      </g>
      <text class="axis" x="1815" y="200">Z</text><text class="axis" x="1845" y="241">Y</text><text class="axis" x="1795" y="247">X</text>

      <path d="M1851 296v-7q0-1.500 1.300-1.500t1.300 1.500v4-5.500q0-1.500 1.300-1.500t1.300 1.500v5-4.500q0-1.500 1.400-1.500t1.300 1.500v6-3.500q0-1.500 1.400-1.500t1.300 1.500c0 5-.3 13-7.500 13-4.500 0-6-4-8.500-8-.5-1.200 1.500-2.200 2.800-.8z" fill="none" stroke="#e8e8e8" stroke-width="1.400" stroke-linecap="round" stroke-linejoin="round"/>
      <g fill="none" stroke="#f0f0f0" stroke-width="2"><circle cx="1852.500" cy="326" r="6.300"/><path d="m1857 331 5.500 5.500M1849.500 326h6M1852.500 323v6"/></g>
      <path d="M1839 348h31" stroke="#ddd" stroke-width="1.500"/>
      <circle cx="1854" cy="823" r="14.500" fill="#2b2b2b" stroke="#777" stroke-width="1.500"/>
      <text class="help" x="1854" y="829">?</text>
    </svg>`;
  }
}

@customElement("msr-viewer")
class MsrViewer extends LitElement {
  static styles = [base, css`
    :host { display: flex; flex-direction: column; min-width: 0; min-height: 0; background: #222; }
    .tools { height: 38px; display: flex; align-items: center; padding: 0 13px 0 5px; }
    .tools button { width: 31px; height: 24px; justify-content: center; flex: none; }
    .tools .set { width: auto; gap: 6px; }
    .tools .last { margin-left: auto; width: 16px; }
    .sep { width: 1px; height: 12px; background: #555; margin-right: -1px; }
    .sep.b { margin: 0 8px 0 -1px; }
    .results { height: 134px; overflow: hidden; border-top: 2px solid #505050; background: #2a2a2a; flex: none; }
    .rhead { height: 21px; background: #1a1a1a; display: flex; align-items: center; justify-content: space-between; padding: 0 5px 0 6px; }
    .row { height: 29px; display: flex; align-items: center; gap: 2px; padding: 0 10px 0 13px; border-bottom: 1px solid #1e1e1e; white-space: nowrap; font-family: "Open Sans", "Noto Sans CJK SC", sans-serif; }
    .sw { width: 31px; height: 16px; margin-right: 12px; border-radius: 2px; line-height: 16px; text-align: center; color: #fff; }
    .blue { background: #0ab4fb; } .ng { background: #fd6a68; }
    .cut { width: 1px; height: 16px; background: #606060; }
    .end { margin-left: auto; display: flex; align-items: center; gap: 8px; }
    .val { color: #ef4f4f; }
    .pin { padding: 0 8px; }
  `];
  private row(sw: unknown, name: string, icon: unknown, text: string, end: unknown = nothing) {
    return html`<div class="row">${sw}<span>${name}</span><span class="cut"></span>${icon}<span>${text}</span><span class="end">${end}<button aria-label="显示">${icons.eye}</button></span></div>`;
  }
  render() {
    const d = (c: string[], on = false) => html`<svg width="20" height="20" viewBox="0 0 20 20">${on ? svg`<rect x="1" y="1" width="18" height="18" fill="#4a4a4a" stroke="#ddd" stroke-width="1.600"/>` : nothing}${dots(c)}</svg>`;
    const none = html`<span class="sw"></span>`;
    return html`
      <div class="bar">数据查看器</div>
      <div class="tools">
        <button aria-label="三维视图">${icons.cube}</button>
        <button aria-label="深度图">${icons.hatch}</button>
        <button aria-label="轮廓">${icons.curve}</button>
        <span class="sep"></span>
        <button aria-label="白色点">${d(["#eee", "#eee", "#eee"])}</button>
        <button aria-label="彩色点">${d(["#d8322c", "#f0b020", "#2a8ae0"], true)}</button>
        <button aria-label="灰度点">${d(["#ddd", "#999", "#666"])}</button>
        <button aria-label="图层">${layers("#6a6a6a", "#6a6a6a")}</button>
        <button aria-label="彩色图层">${layers("#8c2c28", "#9a7420")}</button>
        <span class="sep b"></span>
        <button class="set">点云设置${icons.right}</button>
        <button class="last" aria-label="展开">${icons.expand}</button>
      </div>
      <msr-scene></msr-scene>
      <div class="results">
        <div class="rhead"><span>结果输出</span><svg width="9" height="6" viewBox="0 0 9 6" fill="none" stroke="#bbb"><path d="m.5.500 4 4 4-4"/></svg></div>
        ${this.row(none, "特征区域", icons.points, "")}
        ${this.row(none, "测量表面平面度_1", icons.hatchSm, "深度图(输入)")}
        ${this.row(html`<span class="sw blue"></span>`, "测量表面平面度_1", icons.points, "全局拟合平面(输出)")}
        ${this.row(html`<span class="sw ng">NG</span>`, "测量表面平面度_1", icons.range, "全局平面度(输出)", html`<span class="val">1.828 mm</span><button class="pin" aria-label="固定">${icons.pin}</button><span class="cut"></span>`)}
      </div>`;
  }
}

@customElement("app-root")
class AppRoot extends LitElement {
  static styles = [base, css`
    :host { background: #fff; padding: 26px 40px 22px 41px; height: 100vh; min-height: 720px; }
    .frame { height: 100%; background: #000; border-radius: 46px; overflow: hidden; padding: 0 2px 0 5px; display: flex; flex-direction: column; }
    .title { height: 41px; flex: none; display: flex; align-items: center; padding: 0 14px 0 3px; }
    .logo { width: 18px; height: 16px; background: #0c4a86; color: #58b8f4; border-radius: 2px; font: 700 9px/16px "Open Sans", sans-serif; display: flex; justify-content: center; margin-right: 11px; margin-top: 6px; }
    nav { display: flex; gap: 15px; padding-top: 6px; }
    .app { margin-left: auto; padding-top: 7px; color: #9c9c9c; font-family: "Open Sans", sans-serif; font-weight: 700; }
    .win { display: flex; align-items: center; gap: 34px; margin-left: 43px; padding-top: 7px; }
    .top { height: 30px; flex: none; background: #1b1b1b; display: flex; align-items: center; justify-content: center; gap: 30px; margin-bottom: 2px; padding-bottom: 2px; }
    .top button { gap: 3px; }
    main { flex: 1; min-height: 0; display: grid; grid-template-columns: 211px minmax(0, 703fr) minmax(0, 914fr); gap: 2px; }
    .center { display: flex; flex-direction: column; min-width: 0; min-height: 0; }
    .tabs { height: 21px; flex: none; display: flex; background: #404040; font-weight: 700; line-height: 21px; }
    .ok { width: 143px; background: #0a9a70; text-align: center; color: #fff; }
    .tab { padding: 0 10px; color: #fff; }
    .work { flex: 1; min-height: 0; display: flex; gap: 2px; }
  `];
  render() {
    return html`<div class="frame">
      <header class="title">
        <span class="logo">MSR</span>
        <nav>${menus.map(([t, k]) => html`<button>${t}(<u>${k}</u>)</button>`)}</nav>
        <span class="app">Mech-MSR</span>
        <div class="win">
          <button aria-label="最小化"><svg width="12" height="12" viewBox="0 0 12 12"><path d="M0 6h12" stroke="#ddd" stroke-width="1.500"/></svg></button>
          <button aria-label="还原"><svg width="13" height="13" viewBox="0 0 13 13" fill="none" stroke="#ddd" stroke-width="1.200"><rect x=".6" y="3" width="9.400" height="9.400" rx="1"/><path d="M3 3V.6h9.400V10H10"/></svg></button>
          <button aria-label="关闭"><svg width="10" height="10" viewBox="0 0 10 10" stroke="#eee" stroke-width="1.500"><path d="m.5.500 9 9m0-9-9 9"/></svg></button>
        </div>
      </header>
      <div class="top"><button>${icons.newcase}从案例库新建</button><button>${icons.port}通信配置</button><button>${icons.cog}输出管理</button></div>
      <main>
        <msr-sidebar></msr-sidebar>
        <div class="center">
          <div class="tabs"><span class="ok">判定结果: OK</span><span class="tab">手机中框</span></div>
          <div class="work"><msr-flow></msr-flow><msr-params></msr-params></div>
        </div>
        <msr-viewer></msr-viewer>
      </main>
    </div>`;
  }
}
